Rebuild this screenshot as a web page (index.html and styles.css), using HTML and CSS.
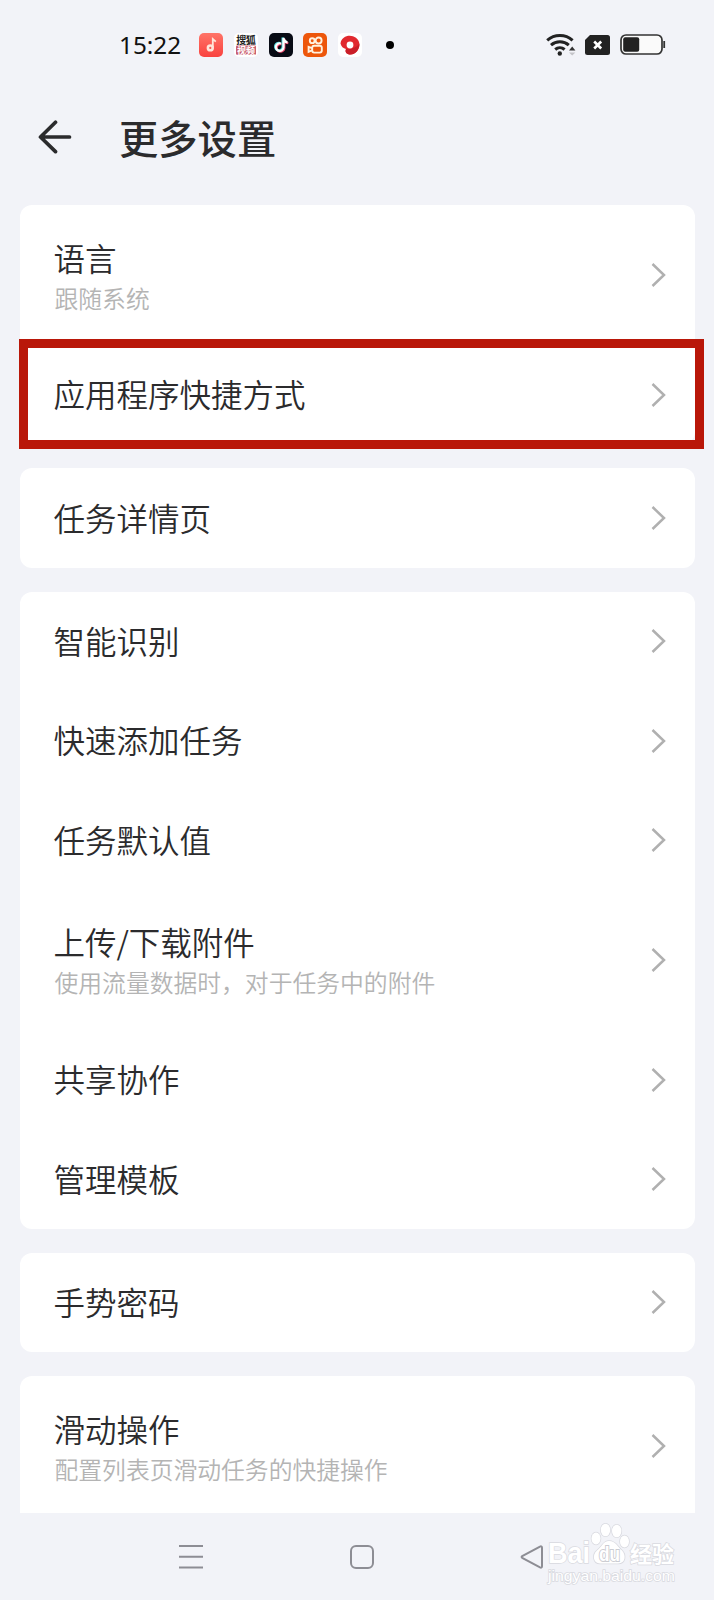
FILE: index.html
```
<!DOCTYPE html>
<html lang="zh-CN">
<head>
<meta charset="utf-8">
<title>更多设置</title>
<link rel="stylesheet" href="styles.css">
</head>
<body>
<svg class="defs" width="0" height="0"><symbol id="chev" viewBox="0 0 16 26"><path d="M1.500 2 13 13 1.500 24" fill="none" stroke="#b0b0b0" stroke-width="2.500"/></symbol></svg>
<div class="screen">
  <header class="status">
    <span class="time">15:22</span>
    <div class="apps">
      <svg width="24" height="24" viewBox="0 0 24 24"><defs><linearGradient id="coral" x2="0" y2="1"><stop stop-color="#ff7468"/><stop offset="1" stop-color="#f9423f"/></linearGradient></defs><rect width="24" height="24" rx="5" fill="url(#coral)"/><circle cx="11.300" cy="14.900" r="2.400" fill="none" stroke="#ffe5da" stroke-width="2.600"/><path d="M13.800 14.500V6l3 2.600" fill="none" stroke="#ffe5da" stroke-width="1.800"/></svg>
      <svg width="24" height="24" viewBox="0 0 24 24"><rect width="24" height="24" rx="5" fill="#fff"/><text class="sohu" x="2.200" y="10.800" textLength="19.500">搜狐</text><rect x="2" y="12.600" width="20" height="9.200" rx="1" fill="#c95f70"/><text class="sohu-sub" x="3" y="20.700" textLength="18">视频</text></svg>
      <svg width="24" height="24" viewBox="0 0 24 24"><rect width="24" height="24" rx="5" fill="#080b15"/><g fill="none" stroke-width="2.200"><path d="M12 10.500a3.800 3.800 0 1 0 2.500 4V5c.3 2.400 1.800 4 4 4.300" stroke="#ef4b70" transform="translate(.8 .8)"/><path d="M12 10.500a3.800 3.800 0 1 0 2.500 4V5c.3 2.400 1.800 4 4 4.300" stroke="#51d8dc" transform="translate(-.9 -.5)"/><path d="M12 10.500a3.800 3.800 0 1 0 2.500 4V5c.3 2.400 1.800 4 4 4.300" stroke="#fff"/></g></svg>
      <svg width="24" height="24" viewBox="0 0 24 24"><rect width="24" height="24" rx="5" fill="#ed560b"/><g fill="none" stroke="#fff2df" stroke-width="1.900"><circle cx="9.200" cy="7.700" r="2.400"/><circle cx="15.600" cy="7.500" r="3"/><rect x="9.200" y="12.800" width="9.600" height="6.800" rx="2"/><path d="M9 15.200 5.600 13.800v5L9 17.400"/></g></svg>
      <svg width="24" height="24" viewBox="0 0 24 24"><rect width="24" height="24" rx="5" fill="#fff"/><path d="M2.500 10.500C4 0 20 .5 21.500 11c.2 5-3.500 10.500-9 10.500-3.800 0-5.800-2.400-4.500-5.500-2.800-.6-4.800-2.400-5.500-5.500z" fill="#e1292f"/><path d="M8 16c5 .8 9.500-1 13.400-5-.3 6-4 10.500-9 10.500-3.800 0-5.800-2.400-4.400-5.500z" fill="#c91e28"/><circle cx="12" cy="12" r="3.400" fill="#fff"/></svg>
    </div>
    <i class="dot"></i>
    <div class="sys">
      <svg width="30" height="24" viewBox="0 0 30 24"><g fill="none" stroke="#222" stroke-width="3"><path d="M1.200 7.400a19 19 0 0 1 25.400 0"/><path d="M5 12.200a13.400 13.400 0 0 1 17.800 0"/><path d="M9.200 16.500a7.200 7.200 0 0 1 9.400 0"/></g><circle cx="13.800" cy="20.500" r="2.200" fill="#222"/><path d="m26.200 13.500 3.200 4H23z" fill="#333"/><path d="m26.200 22.500 3.200-3H23z" fill="#c4c4c8"/></svg>
      <svg class="sim" width="25" height="20" viewBox="0 0 25 20"><path d="M5 0h17.500Q25 0 25 2.500v15q0 2.500-2.500 2.500h-20Q0 20 0 17.500V5z" fill="#222"/><path d="m9.200 6.500 7 7m0-7-7 7" stroke="#fff" stroke-width="2.600"/></svg>
      <svg class="battery" width="46" height="22" viewBox="0 0 46 22"><rect x="1" y="1" width="41" height="19" rx="5" fill="#fafafa" stroke="#333" stroke-width="1.700"/><rect x="3.200" y="3.200" width="16" height="14.500" rx="2" fill="#222"/><path d="M44.200 7v7" stroke="#333" stroke-width="1.800"/></svg>
    </div>
  </header>
  <div class="titlebar">
    <svg width="34" height="34" viewBox="0 0 34 34"><path d="M17.500 2.300 2.500 17l15 14.600M3 17h28.500" fill="none" stroke="#2b2b2d" stroke-width="3.700" stroke-linecap="round" stroke-linejoin="round"/></svg>
    <h1>更多设置</h1>
  </div>
  <main class="list">
    <section class="card">
      <div class="row double"><div class="label"><b>语言</b><small>跟随系统</small></div><svg class="chev"><use href="#chev"/></svg></div>
      <div class="row"><div class="label"><b>应用程序快捷方式</b></div><svg class="chev"><use href="#chev"/></svg><div class="highlight"></div></div>
    </section>
    <section class="card">
      <div class="row"><div class="label"><b>任务详情页</b></div><svg class="chev"><use href="#chev"/></svg></div>
    </section>
    <section class="card">
      <div class="row"><div class="label"><b>智能识别</b></div><svg class="chev"><use href="#chev"/></svg></div>
      <div class="row"><div class="label"><b>快速添加任务</b></div><svg class="chev"><use href="#chev"/></svg></div>
      <div class="row"><div class="label"><b>任务默认值</b></div><svg class="chev"><use href="#chev"/></svg></div>
      <div class="row double"><div class="label"><b>上传/下载附件</b><small>使用流量数据时，对于任务中的附件</small></div><svg class="chev"><use href="#chev"/></svg></div>
      <div class="row"><div class="label"><b>共享协作</b></div><svg class="chev"><use href="#chev"/></svg></div>
      <div class="row"><div class="label"><b>管理模板</b></div><svg class="chev"><use href="#chev"/></svg></div>
    </section>
    <section class="card">
      <div class="row"><div class="label"><b>手势密码</b></div><svg class="chev"><use href="#chev"/></svg></div>
    </section>
    <section class="card">
      <div class="row double"><div class="label"><b>滑动操作</b><small>配置列表页滑动任务的快捷操作</small></div><svg class="chev"><use href="#chev"/></svg></div>
      <div class="row"></div>
    </section>
  </main>
  <nav class="nav">
    <svg width="24" height="26" viewBox="0 0 24 26"><path d="M0 2h24M0 12.700h24M0 23.500h24" stroke="#8d8d94" stroke-width="2"/></svg>
    <svg width="24" height="26" viewBox="0 0 24 26"><rect x="1" y="2" width="22" height="22" rx="5" fill="none" stroke="#8d8d94" stroke-width="2"/></svg>
    <svg width="24" height="26" viewBox="0 0 24 26"><path d="M20 2.600 2.200 12.200q-1.200.8 0 1.600L20 23.400q2 .8 2-1.200V3.800q0-2-2-1.200z" fill="none" stroke="#8d8d94" stroke-width="2"/></svg>
  </nav>
  <svg class="watermark" width="150" height="72" viewBox="540 1516 150 72">
    <g class="wm">
      <text class="wm-latin" x="548" y="1562.500" textLength="42" lengthAdjust="spacingAndGlyphs">Bai</text>
      <ellipse cx="596" cy="1538.500" rx="4.500" ry="6"/><ellipse cx="605.500" cy="1530" rx="4.700" ry="6.300"/><ellipse cx="616.700" cy="1531" rx="4.700" ry="6.300"/><ellipse cx="624.500" cy="1541.500" rx="4.500" ry="6"/>
      <path d="M609 1541c-6 0-7 6-12 9.500-5 4-4 13 3 13h18c8 0 8-9 4-13-5-4-6-9.500-13-9.500z"/>
      <text class="wm-du" x="599" y="1560.500" textLength="21" lengthAdjust="spacingAndGlyphs">du</text>
      <text class="wm-cn" x="630" y="1561.500" textLength="44" lengthAdjust="spacingAndGlyphs">经验</text>
      <text class="wm-url" x="548" y="1580.500" textLength="127" lengthAdjust="spacingAndGlyphs">jingyan.baidu.com</text>
    </g>
  </svg>
</div>
</body>
</html>
```
FILE: styles.css
```
* { box-sizing: border-box; }
body { margin: 0; background: #f2f3f8; font-family: Roboto, "Noto Sans CJK SC", sans-serif; color: #2b2b2d; }
svg { display: block; flex: none; }
.defs { position: absolute; }
.screen { position: relative; width: 714px; height: 1600px; overflow: hidden; display: flex; flex-direction: column; }
.status { height: 90px; padding-left: 119px; display: flex; align-items: center; flex: none; }
.time { width: 80px; font: 24.300px/30px "Noto Sans", sans-serif; color: #111; white-space: nowrap; }
.apps { display: flex; gap: 10.800px; }
.dot { width: 8px; height: 8px; margin-left: 24px; border-radius: 50%; background: #000; }
.sys { display: flex; align-items: center; margin-left: 152px; }
.sim { margin-left: 9px; }
.battery { margin-left: 10px; }
.sohu { font: 700 10px "Noto Sans CJK SC", sans-serif; fill: #222; }
.sohu-sub { font: 700 9px "Noto Sans CJK SC", sans-serif; fill: #fff; }
.titlebar { height: 115px; padding: 30px 0 0 38px; display: flex; align-items: flex-start; gap: 47px; flex: none; }
h1 { margin: -11px 0 0; font: 500 39.300px/56px "Noto Sans CJK SC", sans-serif; }
.list { height: 1308px; padding: 0 19.500px; overflow: hidden; display: flex; flex-direction: column; gap: 24px; flex: none; }
.card { width: 675px; background: #fff; border-radius: 12px; flex: none; }
.row { position: relative; height: 99.400px; padding: 0 27.500px 0 34px; display: flex; align-items: center; justify-content: space-between; }
.row.double { height: 140px; }
.label { display: flex; flex-direction: column; padding-bottom: 3px; }
.double .label { padding-bottom: 2px; }
.label b { font: 350 31.500px/46px "Noto Sans CJK SC", sans-serif; }
.label small { margin: 1px 0 0 1px; font: 350 23.800px/34px "Noto Sans CJK SC", sans-serif; color: #b4b4b4; }
.chev { width: 16px; height: 26px; }
.highlight { position: absolute; left: -1px; top: -6.500px; width: 685px; height: 110px; border: 9px solid #b91709; }
.nav { height: 87px; padding: 0 170px 0 179px; display: flex; align-items: center; justify-content: space-between; }
.watermark { position: absolute; left: 540px; top: 1516px; }
.wm { fill: #fff; stroke: #d9dae0; stroke-width: 1.500px; paint-order: stroke; }
.wm-latin { font: 700 29px "Liberation Sans", sans-serif; }
.wm-du { font: 700 20px "Liberation Sans", sans-serif; stroke: #cbccd2; stroke-width: 2px; }
.wm-cn { font: 700 22px "Noto Sans CJK SC", sans-serif; }
.wm-url { font: 400 15px "Liberation Sans", sans-serif; }
```
